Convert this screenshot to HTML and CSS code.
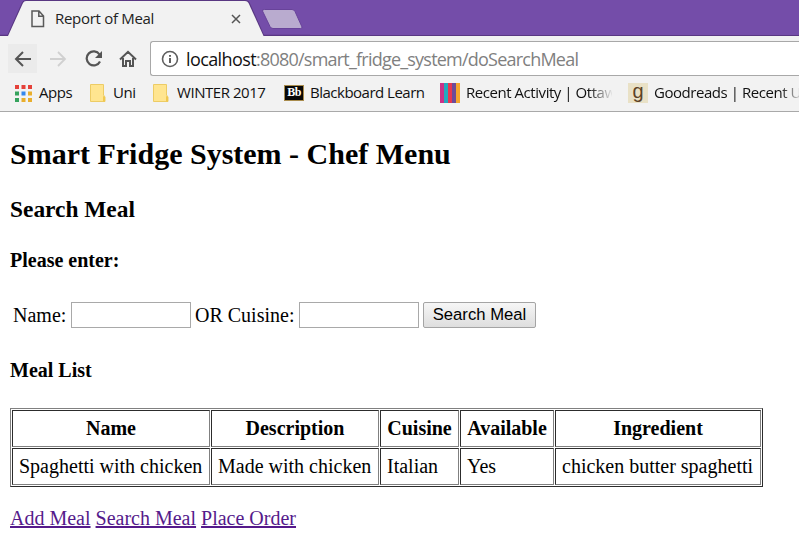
FILE: index.html
```html
<!DOCTYPE html>
<html lang="en">
<head>
<meta charset="utf-8">
<title>Report of Meal</title>
<link rel="stylesheet" href="styles.css">
</head>
<body>
<header class="browser">
  <div class="tabs">
    <svg class="tab-shape" width="310" height="36" viewBox="0 0 310 36">
      <path d="M0 35.5H8L22.5 3Q23.5.8 26 .8H245Q248 .8 249 3L263.500 35.500H310" fill="none" stroke="#593782" stroke-width="1.500"/>
      <path d="M8 36L23 3Q24 1 26 1H245Q247.500 1 248.500 3L263.500 36Z" fill="#f2f2f2"/>
      <path d="M264.500 9.500H292Q294 9.500 295 11.500L302 27Q302.500 28.500 300.500 28.500H273Q271 28.500 270 26.500L262.500 11Q262 9.500 264.500 9.500Z" fill="#b9abcf" stroke="#68439a"/>
    </svg>
    <div class="tab">
      <svg width="14" height="18" viewBox="0 0 14 18" fill="none" stroke="#5a5a5a" stroke-width="1.500"><path d="M1 1H8L12.500 6V16.500H1ZM7.800 1V6.200H12.500"/></svg>
      <span class="tab-title">Report of Meal</span>
      <svg class="close" width="10" height="10" viewBox="0 0 10 10" stroke="#555" stroke-width="1.500"><path d="M1 1L9 9M9 1L1 9"/></svg>
    </div>
  </div>
  <nav class="toolbar">
    <span class="back"><svg width="18" height="16" viewBox="0 0 18 16" fill="none" stroke="#555" stroke-width="2"><path d="M17 8H2M9 1L2 8L9 15"/></svg></span>
    <svg class="forward" width="18" height="16" viewBox="0 0 18 16" fill="none" stroke="#d0d0d0" stroke-width="1.800"><path d="M1 8H16M9 1L16 8L9 15"/></svg>
    <svg class="reload" width="20" height="18" viewBox="0 0 20 18"><path d="M15.500 4.500A7 7 0 1 0 16 11.500" fill="none" stroke="#555" stroke-width="2.200"/><path d="M18 1V8H11Z" fill="#555"/></svg>
    <svg class="home" width="18" height="18" viewBox="0 0 18 18" fill="none" stroke="#555" stroke-width="2"><path d="M1 9.500L9 1.800L17 9.500M4 8V16H7V11H11V16H14V8"/></svg>
    <div class="address">
      <svg width="18" height="18" viewBox="0 0 18 18"><circle cx="9" cy="9" r="7.500" fill="none" stroke="#5f5f5f" stroke-width="1.600"/><path d="M9 8V13M9 5V6.800" stroke="#5f5f5f" stroke-width="2"/></svg>
      <span class="url"><b>localhost</b>:8080/smart_fridge_system/doSearchMeal</span>
    </div>
  </nav>
  <nav class="bookmarks">
    <svg class="apps" width="17" height="17" viewBox="0 0 17 17">
      <path d="M0 0H4V4H0ZM6.500 0H10.500V4H6.500ZM13 0H17V4H13Z" fill="#e5413a"/>
      <path d="M0 6.500H4V10.500H0Z" fill="#36a35d"/><path d="M6.500 6.500H10.500V10.500H6.500Z" fill="#3587ed"/>
      <path d="M13 6.500H17V10.500H13ZM6.500 13H10.500V17H6.500ZM13 13H17V17H13Z" fill="#e9ae2c"/><path d="M0 13H4V17H0Z" fill="#36a35d"/>
    </svg>
    <span class="label l-apps">Apps</span>
    <svg class="folder" width="17" height="19" viewBox="0 0 17 19"><path d="M1.500.5H14.500V11L16 13V17.500H1.500Z" fill="#ffe590" stroke="#edcc65"/><path d="M14 12V17.500H16V13Z" fill="#f1c84f"/></svg>
    <span class="label l-uni">Uni</span>
    <svg class="folder" width="17" height="19" viewBox="0 0 17 19"><path d="M1.500.5H14.500V11L16 13V17.500H1.500Z" fill="#ffe590" stroke="#edcc65"/><path d="M14 12V17.500H16V13Z" fill="#f1c84f"/></svg>
    <span class="label l-winter">WINTER 2017</span>
    <span class="bb">Bb</span>
    <span class="label l-bb">Blackboard Learn</span>
    <span class="stripes"></span>
    <span class="label l-recent">Recent Activity | Ottaw</span>
    <span class="good">g</span>
    <span class="label l-good">Goodreads | Recent U</span>
  </nav>
</header>
<main>
  <h2>Smart Fridge System - Chef Menu</h2>
  <h3>Search Meal</h3>
  <h4>Please enter:</h4>
  <form>
    <label class="name" for="name">Name:</label><input id="name" type="text">
    <label class="cuisine" for="cuisine">OR Cuisine:</label><input id="cuisine" type="text">
    <button type="button">Search Meal</button>
  </form>
  <h4>Meal List</h4>
  <table>
    <colgroup><col class="c1"><col class="c2"><col class="c3"><col class="c4"><col class="c5"></colgroup>
    <tr><th>Name</th><th>Description</th><th>Cuisine</th><th>Available</th><th>Ingredient</th></tr>
    <tr><td>Spaghetti with chicken</td><td>Made with chicken</td><td>Italian</td><td>Yes</td><td>chicken butter spaghetti</td></tr>
  </table>
  <p class="links"><a href="#">Add Meal</a> <a href="#">Search Meal</a> <a href="#">Place Order</a></p>
</main>
</body>
</html>
```
FILE: styles.css
```css
* { box-sizing: border-box; }
body { margin: 0; width: 799px; height: 559px; overflow: hidden; background: #fff; color: #000; font: 20px/24px "Liberation Serif", serif; }
.browser { height: 112px; background: #f2f2f2; border-bottom: 1px solid #a9a9a9; font-family: "Open Sans", sans-serif; }
.tabs { position: relative; height: 36px; background: #744da9; border-bottom: 1px solid #593782; }
.tab-shape { position: absolute; left: 0; top: 0; }
.tab { position: relative; display: flex; align-items: center; height: 38px; padding-left: 31px; }
.tab-title { width: 145px; margin-left: 10px; padding-bottom: 2px; font-size: 15px; letter-spacing: -.3px; color: #222; white-space: nowrap; }
.close { margin-left: 31px; }
.toolbar { display: flex; align-items: center; height: 45px; padding-left: 8px; }
.back { display: flex; align-items: center; justify-content: center; width: 29px; height: 29px; background: #ebebeb; }
.forward { margin-left: 12px; }
.reload { margin-left: 17px; }
.home { margin-left: 15px; }
.address { display: flex; align-items: center; flex: 1; height: 35px; margin-left: 13px; padding-left: 10px; border: 1px solid #a8a8a8; border-right: 0; border-radius: 3px 0 0 3px; background: #fff; }
.url { margin-left: 7px; color: #808080; font-size: 18px; letter-spacing: -.78px; white-space: nowrap; }
.url b { color: #111; font-weight: 400; letter-spacing: -.6px; }
.bookmarks { display: flex; align-items: center; height: 24px; padding-left: 15px; overflow: hidden; }
.bookmarks > * { flex-shrink: 0; }
.label { padding-bottom: 2px; font-size: 15px; letter-spacing: -.45px; line-height: 22px; color: #111; white-space: nowrap; }
.l-apps { width: 51px; margin-left: 7px; }
.l-uni { width: 39px; margin-left: 7px; }
.folder { margin-left: -1px; }
.l-uni + .folder { margin-left: 0; }
.l-winter { width: 107px; margin-left: 8px; }
.bb { width: 20px; height: 16px; background: #080808; border: 1px solid #a98c4d; color: #fff; font: bold 12px/13px "Liberation Serif", serif; text-align: center; letter-spacing: -.5px; }
.l-bb { width: 123px; margin-left: 6px; letter-spacing: -.5px; }
.stripes { width: 20px; height: 20px; margin-left: 7px; background: linear-gradient(90deg, #cb3188 0 20%, #23a8be 20% 40%, #e63750 40% 60%, #6c4b98 60% 80%, #f5a52c 80%); }
.l-recent { width: 146px; margin-left: 6px; -webkit-mask-image: linear-gradient(90deg, #000 84%, transparent 101%); mask-image: linear-gradient(90deg, #000 84%, transparent 101%); }
.good { width: 20px; height: 20px; margin-left: 16px; background: #e9e1c6; color: #5d4225; font: 20px/17px "Liberation Sans", sans-serif; text-align: center; }
.l-good { width: 145px; margin-left: 6px; -webkit-mask-image: linear-gradient(90deg, #000 87%, transparent 103%); mask-image: linear-gradient(90deg, #000 87%, transparent 103%); }
main { padding: 25px 0 0 10px; }
h2, h3, h4, p { margin: 0; }
h2 { font-size: 30px; line-height: 34px; }
h3 { margin-top: 24px; font-size: 23.4px; line-height: 28px; }
h4 { margin-top: 25px; font-size: 20px; line-height: 24px; }
form { display: flex; align-items: center; height: 26px; margin: 30px 0; padding-left: 3px; }
form + h4 { margin-top: 0; }
.name { width: 58px; }
.cuisine { width: 104px; margin-left: 4px; }
input { width: 120px; height: 26px; padding: 0 2px; border: 1px solid #a9a9a9; border-radius: 0; background: #fff; }
button { width: 113px; height: 26px; margin-left: 4px; padding: 0 0 1px; border: 1px solid #a4a4a4; border-radius: 2px; background: linear-gradient(#f6f6f6, #dedede); color: #000; font: 16.67px/20px "Liberation Sans", sans-serif; white-space: nowrap; }
table { width: 753px; height: 79px; margin-top: 26px; table-layout: fixed; border: 1px solid; border-color: #808080 #2c2c2c #2c2c2c #808080; border-collapse: separate; border-spacing: 1px; }
.c1 { width: 198px; } .c2 { width: 168px; } .c3 { width: 79px; } .c4 { width: 94px; } .c5 { width: 206px; }
th, td { height: 37px; padding: 0 6px 1px; border: 1px solid; border-color: #2c2c2c #808080 #808080 #2c2c2c; white-space: nowrap; }
th { text-align: center; }
.links { margin-top: 19px; }
a { color: #551a8b; text-decoration: underline; }
```
